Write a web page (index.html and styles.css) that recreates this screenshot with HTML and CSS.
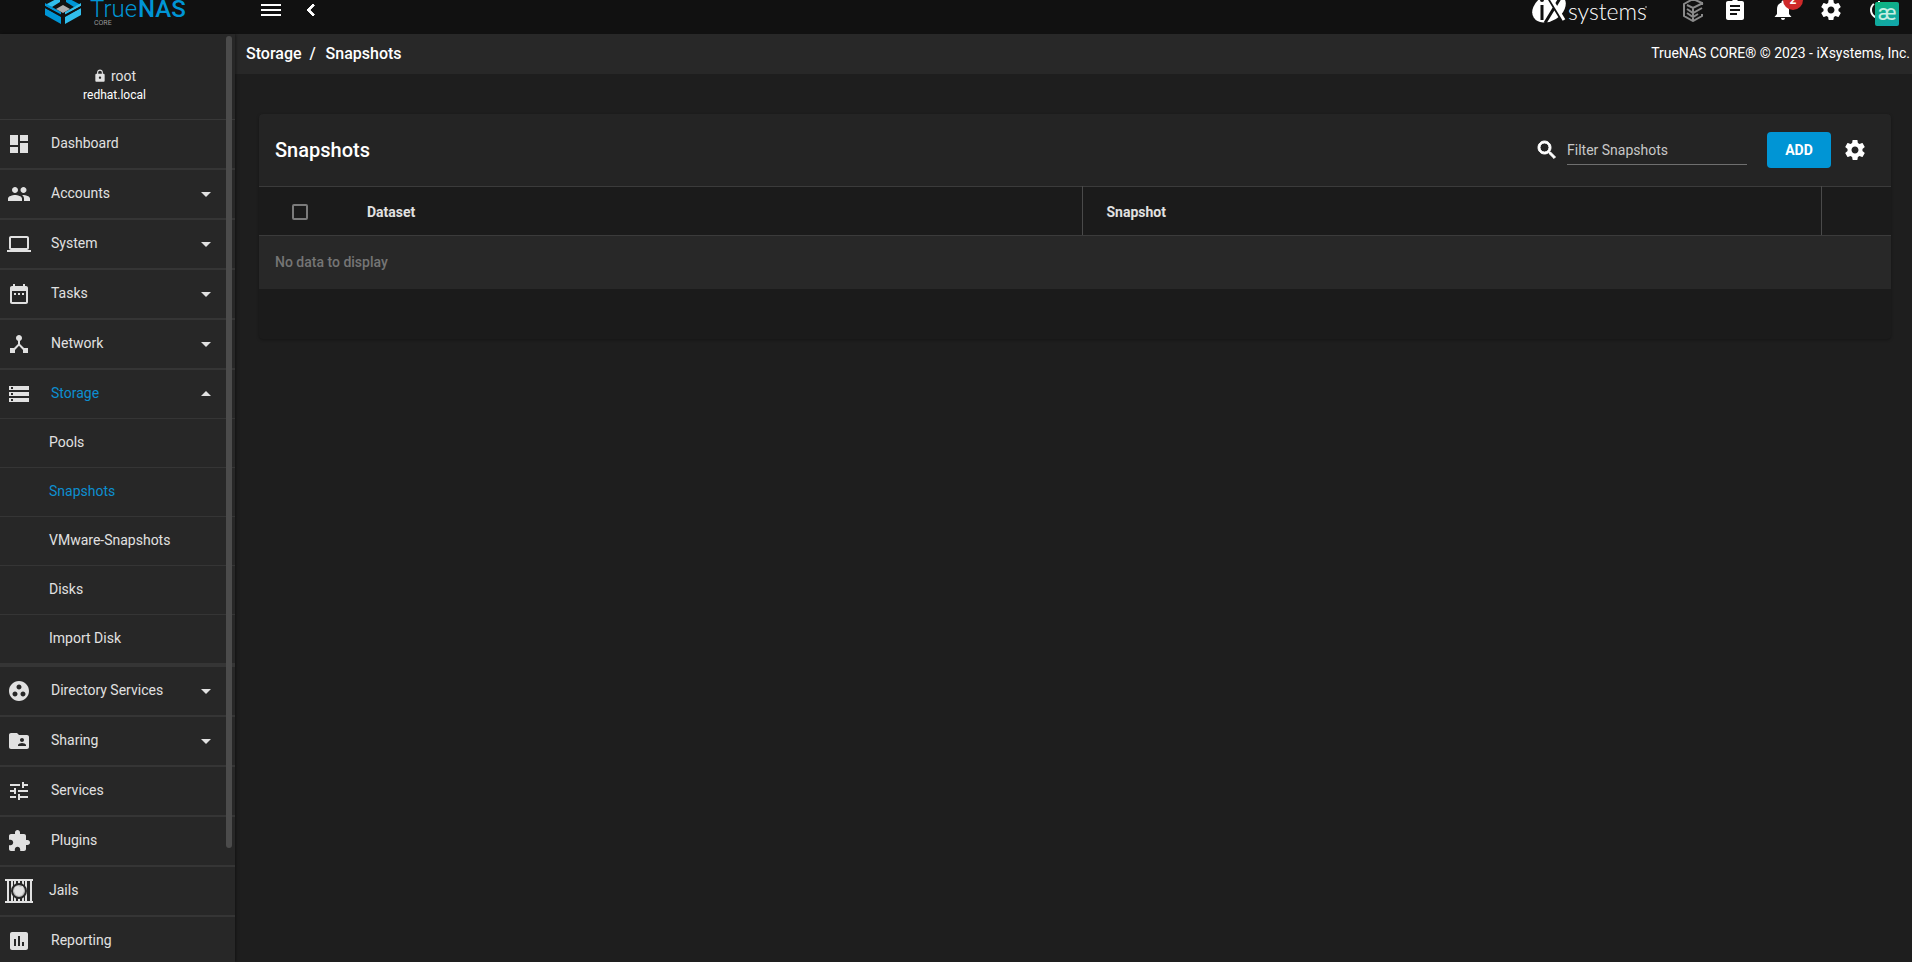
FILE: index.html
```html
<!DOCTYPE html>
<html lang="en">
<head>
    <meta charset="UTF-8">
    <meta name="viewport" content="width=device-width, initial-scale=1.0">
    <title>TrueNAS - Snapshots</title>
    <link rel="stylesheet" href="styles.css">
</head>
<body>
    <header class="topbar">
        <a class="logo" href="#" aria-label="TrueNAS CORE">
            <svg width="160" height="48" viewBox="0 0 160 48">
                <path fill="#31beec" d="M5 19l15-8v5l-8 5zM25 31l16-9v7l-16 9z"/>
                <path fill="#0095d5" d="M41 19l-15-8v5l8 5zM5 22l16 9v7L5 29z"/>
                <path fill="#31beec" d="M34 21l7-4v3l-16 9v-3z"/>
                <path fill="#0095d5" d="M12 21l-7-4v3l16 9v-3z"/>
                <path fill="#111" d="M5 20l17 9h2l17-9v2l-17 9v8h-2v-8L5 22z"/>
                <path fill="#aeadae" d="M23 19l7 4-7 4-7-4z"/>
                <text class="logo-true" x="50" y="31">True</text>
                <text class="logo-nas" x="98" y="31">NAS</text>
                <text class="logo-core" x="54" y="39">CORE</text>
            </svg>
        </a>
        <button class="icon-button" aria-label="Toggle menu">
            <svg class="icon" viewBox="0 0 24 24"><path d="M2 18h20v-2H2v2zm0-5h20v-2H2v2zm0-7v2h20V6H2z"/></svg>
        </button>
        <button class="icon-button" aria-label="Collapse menu">
            <svg class="icon" viewBox="0 0 24 24"><path d="M15.41 7.41L14 6l-6 6 6 6 1.41-1.41L10.83 12z" stroke="#fff"/></svg>
        </button>
        <a class="ix-logo" href="#" aria-label="iXsystems">
            <svg width="122" height="48" viewBox="0 0 122 48">
                <ellipse cx="21" cy="22" rx="18" ry="13" fill="#fff" transform="rotate(-32 21 22)"/>
                <path d="M14 19v15M20 11l15 25M34 9L17 37" stroke="#111" stroke-width="3" fill="none"/>
                <path d="M22 11l14 23" stroke="#fff" stroke-width="3"/>
                <circle cx="14" cy="14" r="2" fill="#111"/>
                <text class="ix-text" x="40" y="34">systems</text>
                <circle cx="118" cy="21" r="1" fill="#888"/>
            </svg>
        </a>
        <div class="top-actions">
            <button class="icon-button icon-button-narrow" aria-label="TrueCommand">
                <svg class="icon icon-truecommand" viewBox="0 0 24 24"><path d="M21 7V5l-9-4-9 5v12l9 5 9-5v-2M6 7l6 3 10-5M6 11l6 4 9-5M6 15l6 4 5-3M12 10v12"/></svg>
            </button>
            <button class="icon-button" aria-label="Task manager">
                <svg class="icon" viewBox="0 0 24 24"><path d="M19 3h-4.18C14.4 1.84 13.3 1 12 1s-2.4.84-2.82 2H5c-1.1 0-2 .9-2 2v15c0 1.1.9 2 2 2h14c1.1 0 2-.9 2-2V5c0-1.1-.9-2-2-2zm-5 14H7v-2h7v2zm3-4H7v-2h10v2zm0-4H7V7h10v2z"/></svg>
            </button>
            <button class="icon-button" aria-label="Notifications">
                <svg class="icon" viewBox="0 0 24 24"><path d="M12 22c1.1 0 2-.9 2-2h-4c0 1.100.89 2 2 2zm6-6v-5c0-3.070-1.640-5.640-4.500-6.320V4c0-.83-.67-1.500-1.500-1.500s-1.500.67-1.500 1.500v.68C7.630 5.360 6 7.920 6 11v5l-2.500 3h17z"/></svg>
                <span class="badge">2</span>
            </button>
            <button class="icon-button" aria-label="Settings">
                <svg class="icon" viewBox="0 0 24 24"><use href="#gear"/></svg>
            </button>
            <button class="icon-button" aria-label="Power">
                <svg class="icon" viewBox="0 0 24 24"><path d="M13 3h-2v10h2V3zm4.830 2.170l-1.420 1.420C17.990 7.860 19 9.810 19 12c0 3.870-3.130 7-7 7s-7-3.130-7-7c0-2.190 1.010-4.140 2.580-5.420L6.170 5.170C4.230 6.820 3 9.260 3 12c0 4.970 4.030 9 9 9s9-4.030 9-9c0-2.740-1.230-5.180-3.170-6.830z"/></svg>
                <span class="extension-badge">æ</span>
            </button>
        </div>
    </header>

    <div class="layout">
        <aside class="sidebar">
            <div class="user">
                <div class="user-name">
                    <svg class="lock" viewBox="0 0 24 24"><path d="M18 8h-1V6c0-2.760-2.240-5-5-5S7 3.240 7 6v2H6c-1.100 0-2 .9-2 2v10c0 1.100.9 2 2 2h12c1.100 0 2-.9 2-2V10c0-1.100-.9-2-2-2zm-6 9c-1.100 0-2-.9-2-2s.9-2 2-2 2 .9 2 2-.9 2-2 2zm3.100-9H8.900V6c0-1.710 1.390-3.100 3.100-3.100s3.100 1.390 3.100 3.100v2z"/></svg>
                    root
                </div>
                <div class="user-host">redhat.local</div>
            </div>
            <nav>
                <a class="nav-item" href="#">
                    <svg class="icon" viewBox="0 0 24 24"><path d="M3 13h8V3H3v10zm0 8h8v-6H3v6zm10 0h8V11h-8v10zm0-18v6h8V3h-8z"/></svg>
                    <span>Dashboard</span>
                </a>
                <button class="nav-item">
                    <svg class="icon" viewBox="0 0 24 24"><path d="M16.500 11c1.660 0 3-1.340 3-3s-1.340-3-3-3-3 1.340-3 3 1.340 3 3 3zM8 11c1.660 0 3-1.340 3-3S9.660 5 8 5 5 6.340 5 8s1.340 3 3 3zm0 2c-2.330 0-7 1.170-7 3.500V19h14v-2.500c0-2.330-4.670-3.500-7-3.500zm8 0c-.29 0-.62.02-.97.05 1.160.84 1.970 1.970 1.970 3.450V19h6v-2.500c0-2.330-4.670-3.500-7-3.500z"/></svg>
                    <span>Accounts</span>
                    <svg class="icon arrow" viewBox="0 0 24 24"><path d="M7 10l5 5 5-5z"/></svg>
                </button>
                <button class="nav-item">
                    <svg class="icon" viewBox="0 0 24 24"><path d="M20 18c1.100 0 2-.9 2-2V6c0-1.100-.9-2-2-2H4c-1.100 0-2 .9-2 2v10c0 1.100.9 2 2 2H0v2h24v-2h-4zM4 6h16v10H4V6z"/></svg>
                    <span>System</span>
                    <svg class="icon arrow" viewBox="0 0 24 24"><path d="M7 10l5 5 5-5z"/></svg>
                </button>
                <button class="nav-item">
                    <svg class="icon" viewBox="0 0 24 24"><path d="M9 11H7v2h2v-2zm4 0h-2v2h2v-2zm4 0h-2v2h2v-2zm2-7h-1V2h-2v2H8V2H6v2H5c-1.110 0-2 .9-2 2v14c0 1.100.89 2 2 2h14c1.100 0 2-.9 2-2V6c0-1.100-.9-2-2-2zm0 16H5V9h14v11z"/></svg>
                    <span>Tasks</span>
                    <svg class="icon arrow" viewBox="0 0 24 24"><path d="M7 10l5 5 5-5z"/></svg>
                </button>
                <button class="nav-item">
                    <svg class="icon" viewBox="0 0 24 24"><path d="M17 16l-4-4V8.820C14.160 8.400 15 7.300 15 6c0-1.660-1.340-3-3-3S9 4.340 9 6c0 1.300.84 2.400 2 2.820V12l-4 4H3v5h5v-3.050l4-4.200 4 4.200V21h5v-5h-4z"/></svg>
                    <span>Network</span>
                    <svg class="icon arrow" viewBox="0 0 24 24"><path d="M7 10l5 5 5-5z"/></svg>
                </button>
                <div class="nav-group">
                    <button class="nav-item active" aria-expanded="true">
                        <svg class="icon" viewBox="0 0 24 24"><path d="M2 20h20v-4H2v4zm2-3h2v2H4v-2zM2 4v4h20V4H2zm4 3H4V5h2v2zm-4 7h20v-4H2v4zm2-3h2v2H4v-2z"/></svg>
                        <span>Storage</span>
                        <svg class="icon arrow" viewBox="0 0 24 24"><path d="M7 14l5-5 5 5z"/></svg>
                    </button>
                    <a class="sub-item" href="#">Pools</a>
                    <a class="sub-item active" href="#">Snapshots</a>
                    <a class="sub-item" href="#">VMware-Snapshots</a>
                    <a class="sub-item" href="#">Disks</a>
                    <a class="sub-item" href="#">Import Disk</a>
                </div>
                <button class="nav-item">
                    <svg class="icon" viewBox="0 0 24 24"><path d="M12 2C6.480 2 2 6.480 2 12s4.480 10 10 10 10-4.480 10-10S17.520 2 12 2zM8 17.500c-1.380 0-2.500-1.120-2.500-2.500s1.120-2.500 2.500-2.500 2.500 1.120 2.500 2.500-1.120 2.500-2.500 2.500zM9.500 8c0-1.380 1.120-2.500 2.500-2.500s2.500 1.120 2.500 2.500-1.120 2.500-2.500 2.500S9.500 9.380 9.500 8zm6.500 9.500c-1.380 0-2.500-1.120-2.500-2.500s1.120-2.500 2.500-2.500 2.500 1.120 2.500 2.500-1.120 2.500-2.500 2.500z"/></svg>
                    <span>Directory Services</span>
                    <svg class="icon arrow" viewBox="0 0 24 24"><path d="M7 10l5 5 5-5z"/></svg>
                </button>
                <button class="nav-item">
                    <svg class="icon" viewBox="0 0 24 24"><path d="M20 6h-8l-2-2H4c-1.100 0-2 .9-2 2v12c0 1.100.9 2 2 2h16c1.100 0 2-.9 2-2V8c0-1.100-.9-2-2-2zm-5 3c1.100 0 2 .9 2 2s-.9 2-2 2-2-.9-2-2 .9-2 2-2zm4 8h-8v-1c0-1.330 2.670-2 4-2s4 .67 4 2v1z"/></svg>
                    <span>Sharing</span>
                    <svg class="icon arrow" viewBox="0 0 24 24"><path d="M7 10l5 5 5-5z"/></svg>
                </button>
                <a class="nav-item" href="#">
                    <svg class="icon" viewBox="0 0 24 24"><path d="M3 17v2h6v-2H3zM3 5v2h10V5H3zm10 16v-2h8v-2h-8v-2h-2v6h2zM7 9v2H3v2h4v2h2V9H7zm14 4v-2H11v2h10zm-6-4h2V7h4V5h-4V3h-2v6z"/></svg>
                    <span>Services</span>
                </a>
                <a class="nav-item" href="#">
                    <svg class="icon" viewBox="0 0 24 24"><path d="M20.500 11H19V7c0-1.100-.9-2-2-2h-4V3.500C13 2.120 11.880 1 10.500 1S8 2.120 8 3.500V5H4c-1.100 0-1.990.9-1.990 2v3.800H3.500c1.490 0 2.700 1.210 2.700 2.700s-1.210 2.700-2.700 2.700H2V20c0 1.100.9 2 2 2h3.800v-1.500c0-1.490 1.210-2.700 2.700-2.700 1.490 0 2.700 1.210 2.700 2.700V22H17c1.100 0 2-.9 2-2v-4h1.500c1.380 0 2.500-1.120 2.500-2.500S21.880 11 20.500 11z"/></svg>
                    <span>Plugins</span>
                </a>
                <a class="nav-item nav-item-jails" href="#">
                    <svg class="icon-jails" viewBox="0 0 28 24">
                        <path d="M0 0h28v2H0zM0 22h28v2H0zM2 2h2v20H2zM6 2h2v20H6zM9 2h2v20H9zM13 2h2v20h-2zM17 2h2v20h-2zM20 2h2v20h-2zM25 2h2v20h-2z"/>
                        <circle class="jail-ring" cx="14" cy="12" r="7"/>
                        <path d="M10 8l3-1 2 1 3-1 1 5-2 4-3 1-3-1-2-4z"/>
                    </svg>
                    <span>Jails</span>
                </a>
                <a class="nav-item" href="#">
                    <svg class="icon" viewBox="0 0 24 24"><path d="M19 3H5c-1.100 0-2 .9-2 2v14c0 1.100.9 2 2 2h14c1.100 0 2-.9 2-2V5c0-1.100-.9-2-2-2zM9 17H7v-7h2v7zm4 0h-2V7h2v10zm4 0h-2v-4h2v4z"/></svg>
                    <span>Reporting</span>
                </a>
            </nav>
            <div class="scroll-thumb"></div>
        </aside>

        <main class="content">
            <div class="breadcrumb-bar">
                <nav class="breadcrumb">
                    <a href="#">Storage</a>
                    <span class="separator">/</span>
                    <a href="#">Snapshots</a>
                </nav>
                <div class="copyright">TrueNAS CORE® © 2023 - iXsystems, Inc.</div>
            </div>

            <section class="card">
                <div class="card-header">
                    <h1>Snapshots</h1>
                    <label class="filter-label" for="filter" aria-label="Filter Snapshots">
                        <svg class="icon" viewBox="0 0 24 24"><path d="M15.500 14h-.79l-.28-.27C15.410 12.590 16 11.110 16 9.500 16 5.910 13.090 3 9.500 3S3 5.910 3 9.500 5.910 16 9.500 16c1.610 0 3.090-.59 4.230-1.570l.27.28v.79l5 4.990L20.490 19l-4.990-5zm-6 0C7.010 14 5 11.990 5 9.500S7.010 5 9.500 5 14 7.010 14 9.500 11.990 14 9.500 14z" stroke="#fff"/></svg>
                    </label>
                    <input class="filter" type="text" id="filter" placeholder="Filter Snapshots">
                    <button class="add-button">ADD</button>
                    <button class="icon-button" aria-label="Table settings">
                        <svg class="icon" viewBox="0 0 24 24"><path id="gear" d="M19.430 12.980c.04-.32.07-.64.07-.98s-.03-.66-.07-.98l2.110-1.650c.19-.15.24-.42.12-.64l-2-3.460c-.12-.22-.39-.3-.61-.22l-2.490 1c-.52-.4-1.080-.73-1.690-.98l-.38-2.650C14.460 2.180 14.250 2 14 2h-4c-.25 0-.46.18-.49.42l-.38 2.650c-.61.25-1.170.59-1.690.98l-2.490-1c-.23-.09-.49 0-.61.22l-2 3.460c-.13.22-.07.49.12.64l2.110 1.650c-.04.32-.07.65-.07.98s.03.66.07.98l-2.110 1.650c-.19.15-.24.42-.12.64l2 3.460c.12.22.39.3.61.22l2.490-1c.52.4 1.080.73 1.690.98l.38 2.650c.03.24.24.42.49.42h4c.25 0 .46-.18.49-.42l.38-2.650c.61-.25 1.170-.59 1.690-.98l2.490 1c.23.09.49 0 .61-.22l2-3.460c.12-.22.07-.49-.12-.64l-2.110-1.650zM12 15.500c-1.930 0-3.500-1.570-3.500-3.500s1.570-3.500 3.500-3.500 3.500 1.570 3.500 3.500-1.570 3.500-3.500 3.500z"/></svg>
                    </button>
                </div>
                <table class="snapshots">
                    <thead>
                        <tr>
                            <th class="col-check"><input type="checkbox" aria-label="Select all"></th>
                            <th>Dataset</th>
                            <th>Snapshot</th>
                            <th class="col-actions"></th>
                        </tr>
                    </thead>
                    <tbody>
                        <tr>
                            <td colspan="4">No data to display</td>
                        </tr>
                    </tbody>
                </table>
                <div class="card-footer"></div>
            </section>
        </main>
    </div>
</body>
</html>
```
FILE: styles.css
```css
* {
    box-sizing: border-box;
}

body {
    margin: 0;
    height: 100vh;
    display: flex;
    flex-direction: column;
    overflow: hidden;
    background: #1e1e1e;
    color: #fff;
    font-family: Roboto, sans-serif;
    font-size: 14px;
}

a {
    color: inherit;
    text-decoration: none;
}

button {
    border: none;
    padding: 0;
    background: none;
    color: inherit;
    font: inherit;
    cursor: pointer;
}

.icon {
    width: 24px;
    height: 24px;
    flex: none;
    fill: currentColor;
}

.icon-button {
    position: relative;
    display: flex;
    align-items: center;
    justify-content: center;
    width: 40px;
    height: 48px;
}

.icon-button-narrow {
    width: 28px;
}

/* Top bar */
.topbar {
    display: flex;
    align-items: flex-end;
    flex: none;
    height: 34px;
    overflow: hidden;
    background: #111;
}

.logo {
    width: 251px;
    height: 48px;
    padding-left: 40px;
}

.logo-true,
.logo-nas {
    fill: #0095d5;
    font-size: 24px;
}

.logo-true {
    font-weight: 300;
}

.logo-nas {
    font-weight: 500;
}

.logo-core {
    fill: #999;
    font-size: 7px;
}

.ix-logo {
    height: 48px;
    margin-left: auto;
}

.ix-text {
    fill: #fff;
    font-family: Lato, sans-serif;
    font-size: 23px;
    font-weight: 300;
}

.top-actions {
    display: flex;
    gap: 8px;
    padding: 0 13px 0 29px;
}

.icon-truecommand {
    fill: none;
    stroke: #8a8a8a;
    stroke-width: 2;
}

.badge {
    position: absolute;
    top: 4px;
    right: 0;
    width: 20px;
    height: 20px;
    border-radius: 50%;
    background: #ce2929;
    font-size: 12px;
    font-weight: 700;
    line-height: 20px;
    text-align: center;
}

.extension-badge {
    position: absolute;
    top: 16px;
    right: 0;
    width: 24px;
    height: 24px;
    border-radius: 2px;
    background: linear-gradient(160deg, #0eb37d, #12a5ae);
    color: #c5eee2;
    font-size: 22px;
    line-height: 22px;
    text-align: center;
}

/* Sidebar */
.layout {
    display: flex;
    flex: 1;
    min-height: 0;
}

.sidebar {
    position: relative;
    flex: none;
    width: 235px;
    overflow: hidden;
    background: #272727;
    color: #e1e1e1;
    box-shadow: 1px 0 3px rgba(0, 0, 0, 0.4);
}

.user {
    height: 86px;
    padding: 32px 6px 0 0;
    border-bottom: 1px solid #383838;
    text-align: center;
}

.user-name {
    display: flex;
    align-items: center;
    justify-content: center;
    gap: 4px;
    line-height: 20px;
}

.lock {
    width: 14px;
    height: 14px;
    fill: currentColor;
}

.user-host {
    color: #fff;
    font-size: 12px;
    line-height: 18px;
}

.nav-item {
    display: flex;
    align-items: center;
    gap: 20px;
    width: 100%;
    height: 50px;
    padding: 0 17px 0 7px;
    border-bottom: 2px solid #353535;
    text-align: left;
}

.nav-item span {
    padding-bottom: 2px;
}

.nav-item.active {
    height: 49px;
    border-bottom-width: 1px;
}

.nav-item.active span,
.sub-item.active {
    color: #0d8fd0;
}

.nav-item-jails {
    gap: 16px;
    padding-left: 5px;
}

.icon-jails {
    width: 28px;
    height: 24px;
    fill: currentColor;
}

.jail-ring {
    fill: #bbb;
    stroke: #272727;
    stroke-width: 2;
}

.arrow {
    margin-left: auto;
}

.nav-group {
    border-bottom: 4px solid #353535;
}

.sub-item {
    display: flex;
    align-items: center;
    height: 49px;
    padding: 0 0 2px 49px;
    border-bottom: 1px solid #353535;
}

.sub-item:last-child {
    height: 48px;
    border-bottom: none;
}

.scroll-thumb {
    position: absolute;
    top: 2px;
    right: 3px;
    width: 6px;
    height: 812px;
    border-radius: 3px;
    background: #4b4b4b;
}

/* Content */
.content {
    flex: 1;
    min-width: 0;
}

.breadcrumb-bar {
    display: flex;
    align-items: center;
    justify-content: space-between;
    height: 40px;
    padding: 0 2px 2px 11px;
    background: #282828;
}

.breadcrumb {
    display: flex;
    gap: 8px;
    font-size: 16px;
    font-weight: 500;
}

.separator {
    width: 8px;
}

.card {
    margin: 40px 21px 0 24px;
    overflow: hidden;
    border-radius: 4px;
    background: #1b1b1b;
    box-shadow: 0 1px 3px rgba(0, 0, 0, 0.3);
}

.card-header {
    display: flex;
    align-items: center;
    height: 72px;
    padding: 0 16px;
    background: #242424;
}

.card-header h1 {
    margin: 0;
    font-size: 20px;
    font-weight: 500;
}

.filter-label {
    display: flex;
    margin-left: auto;
}

.filter {
    width: 180px;
    height: 30px;
    margin: 0 20px 0 8px;
    padding: 0;
    border: none;
    border-bottom: 1px solid #6f6f6f;
    outline: none;
    background: none;
    color: #fff;
    font: inherit;
}

.filter::placeholder {
    color: #c8c8c8;
}

.add-button {
    width: 64px;
    height: 36px;
    margin-right: 4px;
    border-radius: 4px;
    background: #0095d5;
    font-weight: 700;
}

.snapshots {
    width: 100%;
    table-layout: fixed;
    border-collapse: collapse;
}

.snapshots th {
    height: 49px;
    padding: 2px 24px 0;
    border-top: 1px solid #3b3b3b;
    border-bottom: 1px solid #3b3b3b;
    border-right: 1px solid #4a4a4a;
    color: #e1e1e1;
    font-weight: 700;
    text-align: left;
}

.snapshots .col-check {
    width: 84px;
    padding: 2px 0 0 33px;
    border-right: none;
}

.snapshots .col-actions {
    width: 70px;
    border-right: none;
}

.snapshots input {
    display: block;
    appearance: none;
    width: 16px;
    height: 16px;
    margin: 0;
    border: 2px solid #7b7b7b;
    border-radius: 2px;
}

.snapshots td {
    height: 53px;
    padding: 0 16px;
    background: #282828;
    color: #757575;
    font-weight: 500;
}

.card-footer {
    height: 50px;
}
```
